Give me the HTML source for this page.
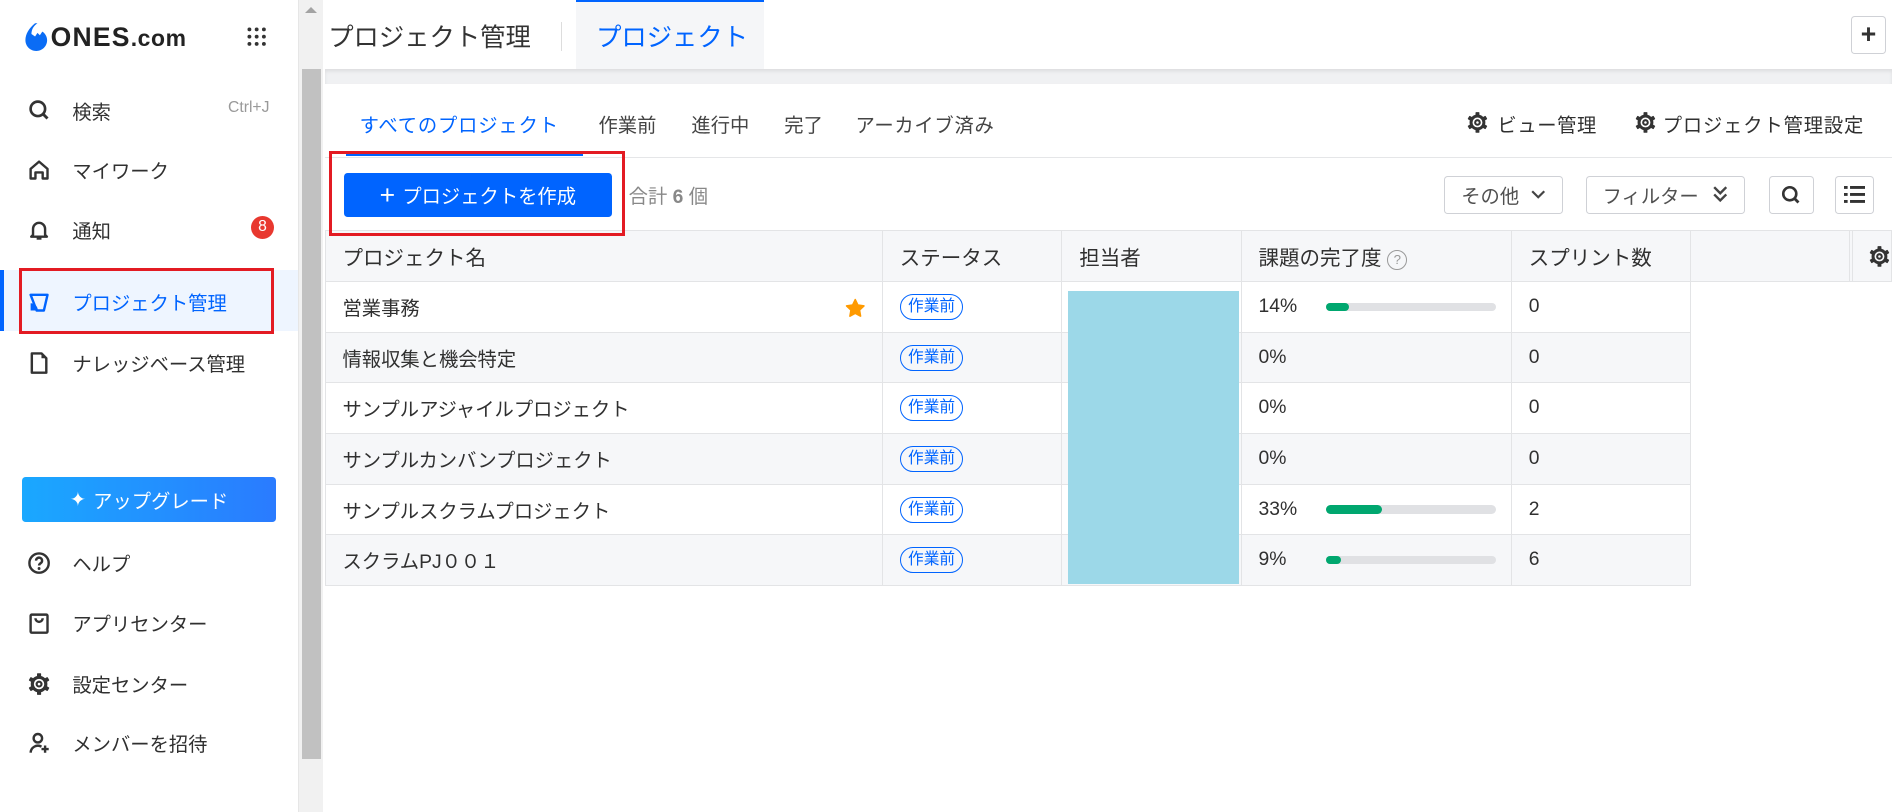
<!DOCTYPE html>
<html><head><meta charset="utf-8">
<style>
html,body{margin:0;padding:0;overflow:hidden;background:#fff}
#w{zoom:1.20663;width:1568px;height:673px;position:relative;font-family:"Liberation Sans","Noto Sans CJK JP",sans-serif;color:#303030;overflow:hidden}
.a{position:absolute}
.nav{position:absolute;left:22px;font-size:16px;display:flex;align-items:center;gap:0}
.nav svg{width:20px;height:20px;margin-right:18px}
.t{white-space:nowrap}
.tbl{position:absolute;left:269px;top:191px;border-collapse:collapse;font-size:16px}
.tbl td{border:1px solid #e3e4e6;height:42px;padding:0 0 0 14px;white-space:nowrap;vertical-align:middle;box-sizing:border-box;position:relative}
.tbl tr:nth-child(odd) td{background:#f6f7f9}
.tag{display:inline-block;border:1px solid #0064ff;color:#0064ff;border-radius:11px;font-size:13px;padding:1px 6px;line-height:18px}
.pc{display:inline-block;width:40px}
.bar{display:inline-block;width:141px;height:7px;border-radius:4px;background:#e0e1e4;position:relative;vertical-align:middle;margin-left:16px}
.bar i{position:absolute;left:0;top:0;height:7px;border-radius:4px;background:#00a76f}
.btn{position:absolute;border:1px solid #cfd1d6;border-radius:3px;box-sizing:border-box;display:flex;align-items:center;justify-content:center;font-size:16px;color:#505050}
</style></head><body><div id="w">
<svg width="0" height="0" style="position:absolute"><defs><g id="gear"><g fill="#333"><rect x="8.3" y="1" width="3.4" height="4" rx="0.6"/><rect x="8.3" y="15" width="3.4" height="4" rx="0.6"/><rect x="8.3" y="1" width="3.4" height="4" rx="0.6" transform="rotate(60 10 10)"/><rect x="8.3" y="15" width="3.4" height="4" rx="0.6" transform="rotate(60 10 10)"/><rect x="8.3" y="1" width="3.4" height="4" rx="0.6" transform="rotate(120 10 10)"/><rect x="8.3" y="15" width="3.4" height="4" rx="0.6" transform="rotate(120 10 10)"/></g><circle cx="10" cy="10" r="5.6" fill="none" stroke="#333" stroke-width="2.6"/><circle cx="10" cy="10" r="2" fill="none" stroke="#333" stroke-width="1.8"/></g></defs></svg>
<!-- sidebar -->
<div class="a" style="left:0;top:0;width:247px;height:673px;border-right:1px solid #e6e6e6;background:#fff"></div>
<svg class="a" style="left:19px;top:18px" width="22" height="26" viewBox="0 0 20 26"><path d="M9 1C4 5 1 10 1 15c0 5 4 9 9 9s9-4 9-9c0-3-2-6-4-7l-2 3-2-2-2 3-3-2c0-4 2-7 5-9z" fill="#0a6cf5"/></svg>
<div class="a t" style="left:42px;top:18px;font-size:22px;font-weight:bold;letter-spacing:1px;color:#222">ONES<span style="font-size:19px;letter-spacing:0.5px">.com</span></div>
<svg class="a" style="left:205px;top:22px" width="16" height="16"><g fill="#333"><circle cx="2" cy="2" r="1.6"/><circle cx="8" cy="2" r="1.6"/><circle cx="14" cy="2" r="1.6"/><circle cx="2" cy="8" r="1.6"/><circle cx="8" cy="8" r="1.6"/><circle cx="14" cy="8" r="1.6"/><circle cx="2" cy="14" r="1.6"/><circle cx="8" cy="14" r="1.6"/><circle cx="14" cy="14" r="1.6"/></g></svg>

<div class="nav" style="top:80px"><svg viewBox="0 0 20 20"><circle cx="9" cy="9" r="6" fill="none" stroke="#333" stroke-width="2.2"/><path d="M13.5 13.5L17 17" stroke="#333" stroke-width="2.4"/></svg><span>検索</span></div>
<div class="a" style="left:189px;top:82px;font-size:13px;color:#999">Ctrl+J</div>
<div class="nav" style="top:129px"><svg viewBox="0 0 20 20"><path d="M3 9L10 3l7 6v8h-4v-5H7v5H3z" fill="none" stroke="#333" stroke-width="2" stroke-linejoin="round"/></svg><span>マイワーク</span></div>
<div class="nav" style="top:179px"><svg viewBox="0 0 20 20"><path d="M5 14V9a5 5 0 0110 0v5l1.5 1.5h-13z" fill="none" stroke="#333" stroke-width="2" stroke-linejoin="round"/><path d="M8 17h4" stroke="#333" stroke-width="2"/></svg><span>通知</span></div>
<div class="a" style="left:208px;top:179px;width:19px;height:19px;border-radius:50%;background:#e8382f;color:#fff;font-size:13px;text-align:center;line-height:19px">8</div>
<div class="a" style="left:18px;top:263px;width:211px;height:1px;background:#e6e6e6"></div>
<div class="a" style="left:0;top:224px;width:247px;height:50px;background:#eef5ff"></div>
<div class="a" style="left:0;top:224px;width:3px;height:50px;background:#0064ff"></div>
<div class="nav" style="top:239px;color:#0064ff"><svg viewBox="0 0 20 20"><path d="M3 4h14l-3 13H8z" fill="none" stroke="#0064ff" stroke-width="2" stroke-linejoin="round"/><path d="M3 11a6 6 0 016 6H3z" fill="#0064ff"/></svg><span>プロジェクト管理</span></div>
<div class="a" style="left:16px;top:222px;width:206px;height:50px;border:3px solid #e31b23"></div>
<div class="nav" style="top:289px"><svg viewBox="0 0 20 20"><path d="M4 2h8l4 4v12H4z" fill="none" stroke="#333" stroke-width="2" stroke-linejoin="round"/><path d="M12 2v4h4z" fill="#333"/></svg><span>ナレッジベース管理</span></div>

<div class="a" style="left:18px;top:395px;width:211px;height:38px;border-radius:3px;background:linear-gradient(90deg,#1aa8ff,#2a7bff);color:#fff;font-size:16px;display:flex;align-items:center;justify-content:center"><span style="margin-right:6px">✦</span>アップグレード</div>
<div class="nav" style="top:455px"><svg viewBox="0 0 20 20"><circle cx="10" cy="10" r="8" fill="none" stroke="#333" stroke-width="2"/><path d="M7.5 8a2.5 2.5 0 114 2c-1 .6-1.5 1-1.5 2" fill="none" stroke="#333" stroke-width="2"/><circle cx="10" cy="14.5" r="1.2" fill="#333"/></svg><span>ヘルプ</span></div>
<div class="nav" style="top:505px"><svg viewBox="0 0 20 20"><rect x="3" y="3" width="14" height="15" rx="1" fill="none" stroke="#333" stroke-width="2"/><path d="M7 6a3 3 0 006 0" fill="none" stroke="#333" stroke-width="2"/></svg><span>アプリセンター</span></div>
<div class="nav" style="top:555px"><svg viewBox="0 0 20 20"><use href="#gear"/></svg><span>設定センター</span></div>
<div class="nav" style="top:604px"><svg viewBox="0 0 20 20"><circle cx="9" cy="6" r="3.5" fill="none" stroke="#333" stroke-width="2"/><path d="M3 18a6 6 0 019-5" fill="none" stroke="#333" stroke-width="2"/><path d="M15 12v6M12 15h6" stroke="#333" stroke-width="2"/></svg><span>メンバーを招待</span></div>

<!-- scrollbar -->
<div class="a" style="left:248px;top:0;width:20px;height:673px;background:#f1f1f1"></div>
<div class="a" style="left:250px;top:57px;width:16px;height:572px;background:#c1c1c1"></div>
<div class="a" style="left:253px;top:6px;width:0;height:0;border-left:5px solid transparent;border-right:5px solid transparent;border-bottom:5px solid #a3a3a3"></div>

<!-- header -->
<div class="a" style="left:269px;top:57px;width:1299px;height:13px;background:#f0f1f3;box-shadow:inset 0 2px 3px rgba(0,0,0,0.08)"></div>
<div class="a t" style="left:272px;top:15px;font-size:21px;color:#333">プロジェクト管理</div>
<div class="a" style="left:465px;top:18px;width:1px;height:24px;background:#ddd"></div>
<div class="a" style="left:477px;top:0;width:156px;height:57px;background:#f5f6f8;border-top:2px solid #0064ff;box-sizing:border-box"></div>
<div class="a t" style="left:494px;top:15px;font-size:21px;color:#0064ff">プロジェクト</div>
<div class="btn" style="left:1534px;top:13px;width:29px;height:32px;font-size:22px;color:#333;font-weight:bold">+</div>

<!-- tabs -->
<div class="a t" style="left:298px;top:91px;font-size:16px;color:#0064ff;letter-spacing:0.7px">すべてのプロジェクト</div>
<div class="a t" style="left:496px;top:91px;font-size:16px;color:#444">作業前</div>
<div class="a t" style="left:573px;top:91px;font-size:16px;color:#444">進行中</div>
<div class="a t" style="left:650px;top:91px;font-size:16px;color:#444">完了</div>
<div class="a t" style="left:709px;top:91px;font-size:16px;color:#444;letter-spacing:0.6px">アーカイブ済み</div>
<div class="a" style="left:269px;top:130px;width:1299px;height:1px;background:#e5e6e8"></div>
<div class="a" style="left:287px;top:127px;width:196px;height:2px;background:#0064ff"></div>
<svg class="a" style="left:1215px;top:92px" width="19" height="19" viewBox="0 0 20 20"><use href="#gear"/></svg>
<div class="a t" style="left:1241px;top:91px;font-size:16px;letter-spacing:0.5px">ビュー管理</div>
<svg class="a" style="left:1354px;top:92px" width="19" height="19" viewBox="0 0 20 20"><use href="#gear"/></svg>
<div class="a t" style="left:1378px;top:91px;font-size:16px;letter-spacing:0.7px">プロジェクト管理設定</div>

<!-- toolbar -->
<div class="a" style="left:285px;top:143px;width:222px;height:37px;background:#0064ff;border-radius:3px;color:#fff;font-size:16px;display:flex;align-items:center;justify-content:center"><span style="font-size:22px;margin-right:6px;line-height:1">+</span>プロジェクトを作成</div>
<div class="a t" style="left:521px;top:150px;font-size:16px;color:#888">合計 <b>6</b> 個</div>
<div class="btn" style="left:1197px;top:146px;width:98px;height:31px">その他 <svg width="12" height="8" style="margin-left:10px"><path d="M1 1l5 5 5-5" fill="none" stroke="#444" stroke-width="1.8"/></svg></div>
<div class="btn" style="left:1314px;top:146px;width:132px;height:31px">フィルター <svg width="12" height="14" style="margin-left:12px"><path d="M1 1l5 5 5-5M1 7l5 5 5-5" fill="none" stroke="#444" stroke-width="2"/></svg></div>
<div class="btn" style="left:1466px;top:146px;width:37px;height:31px"><svg width="18" height="18" viewBox="0 0 20 20"><circle cx="9" cy="9" r="6" fill="none" stroke="#333" stroke-width="2.4"/><path d="M13.5 13.5L17 17" stroke="#333" stroke-width="2.6"/></svg></div>
<div class="btn" style="left:1521px;top:146px;width:32px;height:31px"><svg width="18" height="14" viewBox="0 0 18 14"><g fill="#333"><rect x="0" y="0" width="3" height="2.4"/><rect x="5" y="0" width="13" height="2.4"/><rect x="0" y="5.8" width="3" height="2.4"/><rect x="5" y="5.8" width="13" height="2.4"/><rect x="0" y="11.6" width="3" height="2.4"/><rect x="5" y="11.6" width="13" height="2.4"/></g></svg></div>

<!-- table -->
<div class="a" style="left:269px;top:191px;width:1299px;height:42px;background:#f5f6f8;border-top:1px solid #e3e4e6;border-bottom:1px solid #e3e4e6;box-sizing:border-box"></div>
<table class="tbl">
<tr><td style="width:463px;font-size:17px">プロジェクト名</td><td style="width:149px;font-size:17px">ステータス</td><td style="width:149px;font-size:17px">担当者</td><td style="width:224px;font-size:17px">課題の完了度 <span style="display:inline-block;width:15px;height:15px;border:1.5px solid #999;border-radius:50%;font-size:11px;text-align:center;line-height:15px;color:#999;vertical-align:middle">?</span></td><td style="width:149px;font-size:17px">スプリント数</td><td style="width:132px"></td><td style="width:33px;padding:0"><svg width="19" height="19" viewBox="0 0 20 20" style="display:block;margin-left:15px"><use href="#gear"/></svg></td></tr>
<tr><td>営業事務<svg class="a" style="right:14px;top:13px" width="17" height="17" viewBox="0 0 20 20"><path d="M10 1.5l2.6 5.4 5.9.8-4.3 4.1 1 5.9L10 14.9l-5.2 2.8 1-5.9L1.5 7.7l5.9-.8z" fill="#ff9a00" stroke="#ff9a00" stroke-width="1.5" stroke-linejoin="round"/></svg></td><td><span class="tag">作業前</span></td><td></td><td><span class="pc">14%</span><span class="bar"><i style="width:19px"></i></span></td><td>0</td></tr>
<tr><td>情報収集と機会特定</td><td><span class="tag">作業前</span></td><td></td><td>0%</td><td>0</td></tr>
<tr><td>サンプルアジャイルプロジェクト</td><td><span class="tag">作業前</span></td><td></td><td>0%</td><td>0</td></tr>
<tr><td>サンプルカンバンプロジェクト</td><td><span class="tag">作業前</span></td><td></td><td>0%</td><td>0</td></tr>
<tr><td>サンプルスクラムプロジェクト</td><td><span class="tag">作業前</span></td><td></td><td><span class="pc">33%</span><span class="bar"><i style="width:46px"></i></span></td><td>2</td></tr>
<tr><td>スクラムPJ００１</td><td><span class="tag">作業前</span></td><td></td><td><span class="pc">9%</span><span class="bar"><i style="width:12px"></i></span></td><td>6</td></tr>
</table>
<div class="a" style="left:1535px;top:191px;width:1px;height:42px;background:#e3e4e6"></div>
<div class="a" style="left:885px;top:241px;width:142px;height:243px;background:#9cd8e8"></div>
<div class="a" style="left:273px;top:125px;width:240px;height:66px;border:3px solid #e31b23;z-index:5"></div>
</div></body></html>
